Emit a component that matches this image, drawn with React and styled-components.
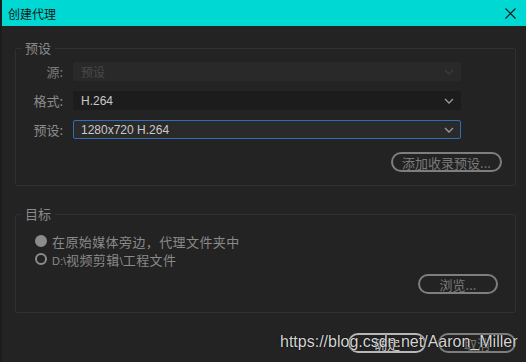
import React from "react";
import styled, { createGlobalStyle } from "styled-components";

const Global = createGlobalStyle`
  html, body {
    margin: 0;
    padding: 0;
    background: #232323;
  }
  * {
    box-sizing: border-box;
  }
`;

const Window = styled.div`
  position: relative;
  width: 526px;
  height: 362px;
  background: #232323;
  border-left: 2px solid #1c1c1c;
  font-family: "Noto Sans CJK SC", "Noto Sans", sans-serif;
  display: flex;
  flex-direction: column;
  overflow: hidden;
`;

const TitleBar = styled.div`
  height: 26px;
  margin-left: -2px;
  background: #00d8d3;
  display: flex;
  align-items: center;
  justify-content: space-between;
  padding: 0 10px 0 8px;
  color: #141414;
  font-size: 12px;
`;

const Body = styled.div`
  padding: 14px 10px 0 13px;
  display: flex;
  flex-direction: column;
`;

const Group = styled.fieldset`
  margin: 0;
  padding: ${(p) => p.$pad};
  border: 1px solid #303030;
  border-radius: 2px;
  min-width: 0;
`;

const Legend = styled.legend`
  padding: 0 4px;
  margin-left: 5px;
  font-size: 13px;
  line-height: 16px;
  color: #8a8a8a;
`;

const Grid = styled.div`
  display: grid;
  grid-template-columns: 47px 388px;
  column-gap: 10px;
  row-gap: 10px;
  align-items: center;
`;

const Label = styled.div`
  text-align: right;
  font-size: 13px;
  color: ${(p) => (p.$dim ? "#7a7a7a" : "#8c8c8c")};
  line-height: 19px;
`;

const Select = styled.div`
  height: 19px;
  display: flex;
  align-items: center;
  justify-content: space-between;
  padding: 0 6px 0 7px;
  border-radius: 2px;
  background: ${(p) => p.$bg};
  border: 1px solid ${(p) => p.$border || p.$bg};
  color: ${(p) => p.$color || "#c9c9c9"};
  font-family: "Liberation Sans", "Noto Sans CJK SC", sans-serif;
  font-size: 12px;
`;

const Chevron = ({ color }) => (
  <svg width="10" height="6" viewBox="0 0 10 6">
    <path d="M1 1 L5 5 L9 1" fill="none" stroke={color} strokeWidth="1.3" />
  </svg>
);

const ButtonRow = styled.div`
  display: flex;
  justify-content: flex-end;
  gap: 12px;
  margin-top: ${(p) => p.$top || 0};
  padding-right: ${(p) => p.$right || 0};
`;

const PillButton = styled.div`
  width: ${(p) => p.$w};
  height: 20px;
  border: 2px solid ${(p) => (p.$primary ? "#b8b8b8" : "#7e7e7e")};
  border-radius: 10px;
  display: flex;
  align-items: center;
  justify-content: center;
  font-size: 13px;
  line-height: 1;
  color: ${(p) => (p.$primary ? "#d0d0d0" : "#7a7a7a")};
`;

const RadioRow = styled.div`
  display: flex;
  align-items: center;
  height: 18px;
  gap: 5px;
  padding-left: 19px;
  font-size: 13px;
  letter-spacing: 0.4px;
  color: #8a8a8a;
`;

const Radio = styled.span`
  width: 12px;
  height: 12px;
  border-radius: 50%;
  background: ${(p) => (p.$on ? "#8c8c8c" : "transparent")};
  border: 2px solid #8c8c8c;
  flex-shrink: 0;
`;

const Drive = styled.span`
  font-family: "Liberation Sans", sans-serif;
  font-size: 11px;
  letter-spacing: 0;
`;

const Watermark = styled.div`
  position: absolute;
  left: 278px;
  top: 333px;
  font-family: "Liberation Sans", Arial, sans-serif;
  font-size: 16px;
  color: #d6d6d6;
  text-shadow: 0 0 1px #000, 0 0 1px #000;
  white-space: nowrap;
  pointer-events: none;
`;

export default function App() {
  return (
    <>
      <Global />
      <Window>
        <TitleBar>
          <span>创建代理</span>
          <svg width="11" height="11" viewBox="0 0 11 11">
            <path d="M0.5 0.5 L10.5 10.5 M10.5 0.5 L0.5 10.5" stroke="#111" strokeWidth="1.1" />
          </svg>
        </TitleBar>
        <Body>
          <Group $pad="6px 13px 13px 0">
            <Legend>预设</Legend>
            <Grid>
              <Label $dim>源:</Label>
              <Select $bg="#292929" $color="#4a4a4a">
                <span style={{ fontFamily: "Noto Sans CJK SC, sans-serif" }}>预设</span>
                <Chevron color="#3c3c3c" />
              </Select>
              <Label>格式:</Label>
              <Select $bg="#1c1c1c">
                <span>H.264</span>
                <Chevron color="#9a9a9a" />
              </Select>
              <Label>预设:</Label>
              <Select $bg="#2a2a2a" $border="#2f6db5">
                <span>1280x720 H.264</span>
                <Chevron color="#9a9a9a" />
              </Select>
            </Grid>
            <ButtonRow $top="13px">
              <PillButton $w="111px">添加收录预设...</PillButton>
            </ButtonRow>
          </Group>

          <Group $pad="10px 17px 18px 0" style={{ marginTop: "20px" }}>
            <Legend>目标</Legend>
            <RadioRow>
              <Radio $on />
              在原始媒体旁边，代理文件夹中
            </RadioRow>
            <RadioRow>
              <Radio />
              <span>
                <Drive>D:\</Drive>视频剪辑<Drive>\</Drive>工程文件
              </span>
            </RadioRow>
            <ButtonRow $top="6px">
              <PillButton $w="80px">浏览...</PillButton>
            </ButtonRow>
          </Group>

          <ButtonRow $top="20px">
            <PillButton $w="78px" $primary>确定</PillButton>
            <PillButton $w="78px">取消</PillButton>
          </ButtonRow>
        </Body>
        <Watermark>https://blog.csdn.net/Aaron_Miller</Watermark>
      </Window>
    </>
  );
}
